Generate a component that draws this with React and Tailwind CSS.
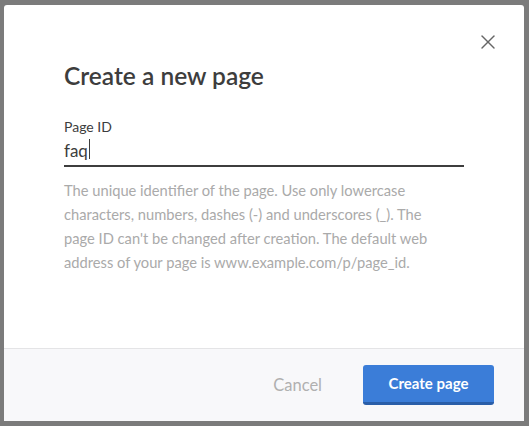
import { X } from 'lucide-react'

export default function App() {
  return (
    <div className="w-[529px] h-[426px] bg-[#7b7b7b] pt-[5px] pl-[4px]" style={{ fontFamily: 'Lato, "Noto Sans", sans-serif' }}>
      <div className="w-[520px] h-[416px] bg-white rounded-t-[3px] flex flex-col overflow-hidden">
        <div className="relative flex-1 px-[60px] pt-[55px]">
          <button className="absolute right-[24px] top-[25px] text-[#666]">
            <X size={24} strokeWidth={1.4} />
          </button>
          <h1 className="text-[24.5px] leading-[32px] font-semibold text-[#3d3d3d]">Create a new page</h1>
          <div className="mt-[26px]">
            <label className="block text-[14px] leading-[18px] text-[#3d3d3d]">Page ID</label>
            <div className="border-b-2 border-[#3d3d3d] h-[31px] flex items-start pt-[2px] text-[17px] text-[#3d3d3d]">
              faq<span className="inline-block w-px h-[20px] bg-[#3d3d3d] ml-px mt-[1px]"></span>
            </div>
            <p className="mt-[11px] text-[14.7px] leading-[24px] text-[#aaaaaa] whitespace-nowrap">
              The unique identifier of the page. Use only lowercase
              <br />
              characters, numbers, dashes (-) and underscores (_). The
              <br />
              page ID can't be changed after creation. The default web
              <br />
              address of your page is www.example.com/p/page_id.
            </p>
          </div>
        </div>
        <div className="h-[73px] bg-[#f8f8fa] border-t border-[#e4e4e6] flex items-center justify-end pr-[30px] gap-[41px]">
          <button className="text-[16.5px] text-[#b0b0b0]">Cancel</button>
          <button className="w-[131px] h-[40px] bg-[#3b7dd8] border-b-[3px] border-[#2a5ea8] rounded-[3px] text-white text-[15px] font-bold">
            Create page
          </button>
        </div>
      </div>
    </div>
  )
}
